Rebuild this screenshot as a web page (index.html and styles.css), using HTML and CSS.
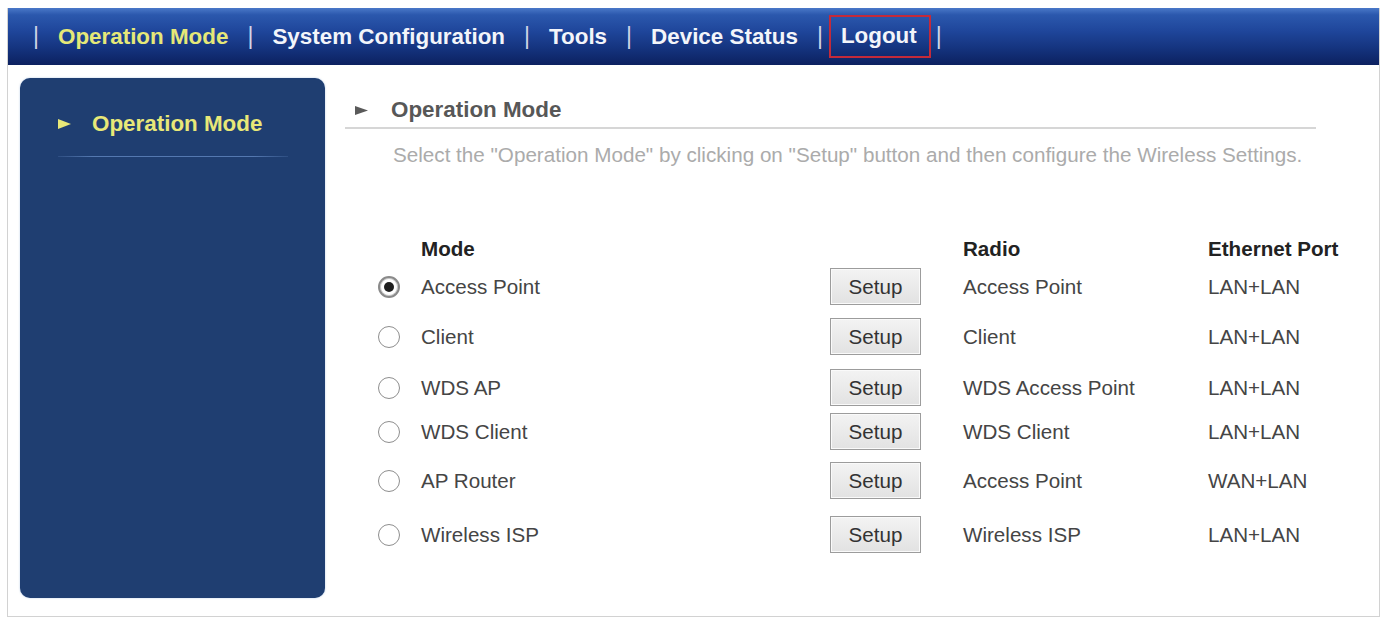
FILE: index.html
```html
<!DOCTYPE html>
<html lang="en">
<head>
<meta charset="utf-8">
<title>Operation Mode</title>
<link rel="stylesheet" href="styles.css">
</head>
<body>
<div class="page">
  <nav class="topnav">
    <span class="sep">|</span>
    <a class="nav-item active">Operation Mode</a>
    <span class="sep">|</span>
    <a class="nav-item">System Configuration</a>
    <span class="sep">|</span>
    <a class="nav-item">Tools</a>
    <span class="sep">|</span>
    <a class="nav-item">Device Status</a>
    <span class="sep">|</span>
    <a class="nav-item logout">Logout</a>
    <span class="sep">|</span>
  </nav>
  <div class="content">
    <aside class="sidebar">
      <div class="side-item">
        <svg class="side-arrow" width="13" height="10" viewBox="0 0 13 10"><polygon points="0,0 13,5 0,10" fill="#e8e878"/></svg>
        <span>Operation Mode</span>
      </div>
      <div class="side-rule"></div>
    </aside>
    <main class="main">
      <h2 class="heading">
        <svg class="head-arrow" width="13" height="9" viewBox="0 0 13 9"><polygon points="0,0 13,4.5 0,9" fill="#5a5a5a"/></svg>
        <span>Operation Mode</span>
      </h2>
      <p class="desc">Select the "Operation Mode" by clicking on "Setup" button and then configure the Wireless Settings.</p>
      <div class="modes">
        <div class="hcell"></div>
        <div class="hcell">Mode</div>
        <div class="hcell"></div>
        <div class="hcell">Radio</div>
        <div class="hcell">Ethernet Port</div>

        <div class="cell"><span class="radio checked"></span></div>
        <div class="cell">Access Point</div>
        <div class="cell"><button class="setup">Setup</button></div>
        <div class="cell">Access Point</div>
        <div class="cell">LAN+LAN</div>

        <div class="cell"><span class="radio"></span></div>
        <div class="cell">Client</div>
        <div class="cell"><button class="setup">Setup</button></div>
        <div class="cell">Client</div>
        <div class="cell">LAN+LAN</div>

        <div class="cell"><span class="radio"></span></div>
        <div class="cell">WDS AP</div>
        <div class="cell"><button class="setup">Setup</button></div>
        <div class="cell">WDS Access Point</div>
        <div class="cell">LAN+LAN</div>

        <div class="cell"><span class="radio"></span></div>
        <div class="cell">WDS Client</div>
        <div class="cell"><button class="setup">Setup</button></div>
        <div class="cell">WDS Client</div>
        <div class="cell">LAN+LAN</div>

        <div class="cell"><span class="radio"></span></div>
        <div class="cell">AP Router</div>
        <div class="cell"><button class="setup">Setup</button></div>
        <div class="cell">Access Point</div>
        <div class="cell">WAN+LAN</div>

        <div class="cell"><span class="radio"></span></div>
        <div class="cell">Wireless ISP</div>
        <div class="cell"><button class="setup">Setup</button></div>
        <div class="cell">Wireless ISP</div>
        <div class="cell">LAN+LAN</div>
      </div>
    </main>
  </div>
</div>
</body>
</html>
```
FILE: styles.css
```css
html, body {
  margin: 0;
  padding: 0;
  background: #ffffff;
}

body {
  font-family: "Liberation Sans", Arial, sans-serif;
  color: #444;
}

.page {
  box-sizing: border-box;
  margin: 8px 0 0 7px;
  width: 1373px;
  height: 609px;
  border: 1px solid #d2d2d2;
  border-top: none;
  overflow: hidden;
}

/* ---------- top navigation ---------- */
.topnav {
  height: 57px;
  display: flex;
  align-items: center;
  gap: 19px;
  padding-left: 25px;
  background: linear-gradient(to bottom, #4a78c8 0%, #2b58ad 12%, #1f469b 40%, #15347f 70%, #0c2160 100%);
  font-size: 22.4px;
  font-weight: bold;
}

.sep {
  color: #cfd6e6;
  font-weight: normal;
  font-size: 23px;
}

.nav-item {
  color: #f3f5fa;
  text-decoration: none;
  white-space: nowrap;
}

.nav-item.active {
  color: #e6e878;
}

.nav-item.logout {
  border: 2px solid #c42a3a;
  padding: 6px 12px 7px 10px;
  margin: 0 -14px 0 -13px;
}

/* ---------- content ---------- */
.content {
  display: flex;
  padding: 13px 0 0 12px;
}

.sidebar {
  box-sizing: border-box;
  flex: 0 0 305px;
  height: 520px;
  border-radius: 10px;
  background: #1f3e71;
  box-shadow: 0 0 2px rgba(120, 160, 210, 0.6);
  padding: 33px 37px 0 38px;
}

.side-item {
  display: flex;
  align-items: center;
  height: 26px;
  color: #e8e878;
  font-size: 22.4px;
  font-weight: bold;
  white-space: nowrap;
}

.side-arrow {
  margin-right: 21px;
  flex: 0 0 auto;
}

.side-rule {
  margin-top: 19px;
  height: 1px;
  background: linear-gradient(to right, rgba(80, 115, 170, 0.3), #5478b0 15%, #5478b0 85%, rgba(80, 115, 170, 0.3));
}

.main {
  flex: 1;
  margin-left: 20px;
}

.heading {
  margin: 19px 63px 0 0;
  padding: 0 0 4px 10px;
  height: 26px;
  display: flex;
  align-items: center;
  border-bottom: 2px solid #d6d6d6;
  font-size: 22.4px;
  font-weight: bold;
  color: #575757;
}

.head-arrow {
  margin-right: 23px;
  flex: 0 0 auto;
}

.desc {
  margin: 14px 0 0 48px;
  font-size: 20.65px;
  line-height: 24px;
  color: #ababab;
  white-space: nowrap;
}

/* ---------- modes table ---------- */
.modes {
  margin: 69px 0 0 32px;
  display: grid;
  grid-template-columns: 44px 409px 133px 245px auto;
  grid-template-rows: 32px 50px 51px 44px 49px 54px 37px;
  align-items: start;
  font-size: 20.6px;
}

.hcell {
  height: 26px;
  line-height: 26px;
  font-weight: bold;
  color: #222;
  white-space: nowrap;
}

.cell {
  height: 37px;
  display: flex;
  align-items: center;
  color: #454545;
  white-space: nowrap;
}

.radio {
  box-sizing: border-box;
  display: inline-flex;
  align-items: center;
  justify-content: center;
  width: 22px;
  height: 22px;
  margin-left: 1px;
  border-radius: 50%;
  border: 1.5px solid #8e8e8e;
  background: #fff;
}

.radio.checked {
  border: 2px solid #8a8a8a;
  box-shadow: inset 0 0 0 1px #c8c8c8;
}

.radio.checked::after {
  content: "";
  width: 10px;
  height: 10px;
  border-radius: 50%;
  background: #1e1e1e;
}

.setup {
  box-sizing: border-box;
  width: 91px;
  height: 37px;
  padding: 0;
  border: 1px solid #9c9c9c;
  border-radius: 0;
  background: linear-gradient(to bottom, #f3f3f3, #e2e2e2);
  box-shadow: inset 0 0 0 1px #fafafa;
  font-family: "Liberation Sans", Arial, sans-serif;
  font-size: 20.6px;
  color: #333;
}
```
